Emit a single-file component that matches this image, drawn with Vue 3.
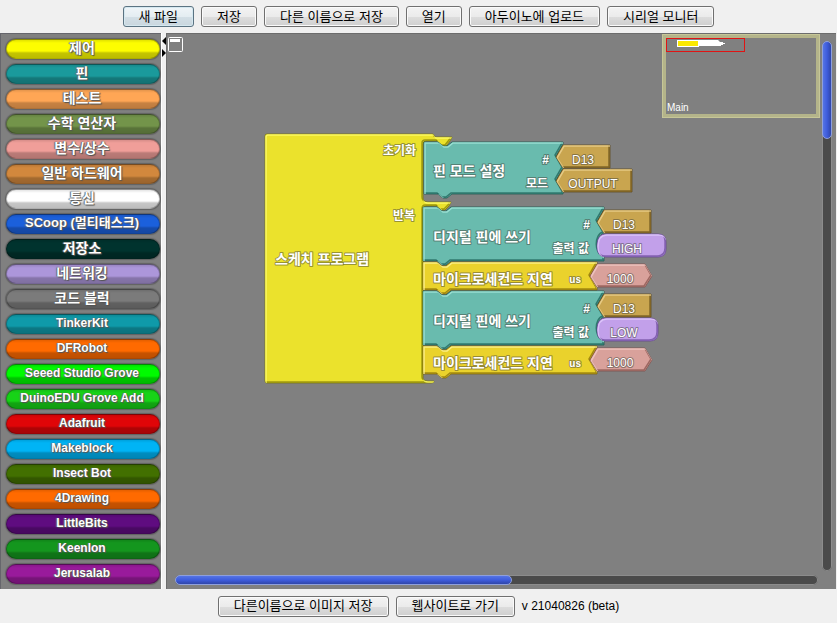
<script setup>
const fileActions = ['새 파일', '저장', '다른 이름으로 저장', '열기', '아두이노에 업로드', '시리얼 모니터']

const drawers = [
  { name: '제어', color: '#fdfd00', script: 'ko' },
  { name: '핀', color: '#1a9a9c', script: 'ko' },
  { name: '테스트', color: '#ffa655', script: 'ko' },
  { name: '수학 연산자', color: '#73944a', script: 'ko' },
  { name: '변수/상수', color: '#f09e99', script: 'ko' },
  { name: '일반 하드웨어', color: '#d2883d', script: 'ko' },
  { name: '통신', color: '#ffffff', script: 'ko' },
  { name: 'SCoop (멀티태스크)', color: '#1b60dc', script: 'mixed' },
  { name: '저장소', color: '#00332e', script: 'ko' },
  { name: '네트워킹', color: '#ac96da', script: 'ko' },
  { name: '코드 블럭', color: '#7b7b7b', script: 'ko' },
  { name: 'TinkerKit', color: '#0f9aa9', script: 'latin' },
  { name: 'DFRobot', color: '#ff6a00', script: 'latin' },
  { name: 'Seeed Studio Grove', color: '#00fb00', script: 'latin' },
  { name: 'DuinoEDU Grove Add', color: '#17d317', script: 'latin' },
  { name: 'Adafruit', color: '#e00508', script: 'latin' },
  { name: 'Makeblock', color: '#00b4f5', script: 'latin' },
  { name: 'Insect Bot', color: '#427000', script: 'latin' },
  { name: '4Drawing', color: '#ff6a00', script: 'latin' },
  { name: 'LittleBits', color: '#5f0c80', script: 'latin' },
  { name: 'Keenlon', color: '#14961e', script: 'latin' },
  { name: 'Jerusalab', color: '#991a9b', script: 'latin' },
]

// Statement block: notch in the top edge, tab under the bottom edge, sockets down the right edge.
function statement(x, y, w, h, sockets) {
  const r = x + w
  let d = `M${x} ${y}H${x + 14}L${x + 19} ${y + 4}H${x + 23}L${x + 28} ${y}H${r}`
  sockets.forEach((kind, i) => {
    const top = y + 2 + i * 24
    d += kind === 'round'
      ? `V${top}C${r - 9} ${top + 2} ${r - 9} ${top + 22} ${r} ${top + 24}`
      : `V${top}L${r - 7} ${top + 12}L${r} ${top + 24}`
  })
  return `${d}V${y + h}H${x + 28}L${x + 23} ${y + h + 4}H${x + 19}L${x + 14} ${y + h}H${x}Z`
}
const tag = (x, y, w) => `M${x} ${y + 12}L${x + 7} ${y}H${x + w}V${y + 23}H${x + 7}Z`
const pill = (x, y, w) =>
  `M${x + 9} ${y}H${x + w - 8}Q${x + w} ${y} ${x + w} ${y + 8}V${y + 15}Q${x + w} ${y + 23} ${x + w - 8} ${y + 23}H${x + 9}Q${x} ${y + 23} ${x} ${y + 12}Q${x} ${y} ${x + 9} ${y}Z`
const hex = (x, y, w) =>
  `M${x} ${y + 12}L${x + 7} ${y}H${x + w - 7}L${x + w} ${y + 12}L${x + w - 7} ${y + 23}H${x + 7}Z`

const program =
  'M265 136Q265 134 267 134H433L435 137H452L450 141L446 146H442L437 141H426Q423 141 423 144V198Q423 202 427 202H451L449 206L445 210H441L437 206H426Q423 206 423 210V378Q423 381 427 381H434Q434 383 431 383H267Q265 383 265 381Z'

const teal = { fill: '#69bbae', light: '#a4e6da', dark: '#12564d' }
const amber = { fill: '#ead22c', light: '#fff59a', dark: '#7c6300' }
const gold = { fill: '#c9a54f', light: '#ecd291', dark: '#5b4413' }
const violet = { fill: '#c2a0ea', light: '#e0cbfb', dark: '#634093' }
const rose = { fill: '#d9a19b', light: '#f1cac5', dark: '#7e4944' }

const shapes = [
  { d: program, fill: '#ebe22c', light: '#ffff70', dark: '#777300' },
  { d: statement(424, 142, 139, 52, ['tag', 'tag']), ...teal },
  { d: statement(423, 207, 181, 54, ['tag', 'round']), ...teal },
  { d: statement(423, 262, 174, 28, ['tag']), ...amber },
  { d: statement(423, 291, 181, 54, ['tag', 'round']), ...teal },
  { d: statement(423, 346, 174, 28, ['tag']), ...amber },
  { d: tag(556, 145, 54), ...gold },
  { d: tag(556, 169, 76), ...gold },
  { d: tag(597, 210, 54), ...gold },
  { d: pill(597, 234, 69), ...violet },
  { d: hex(590, 264, 62), ...rose },
  { d: tag(597, 294, 54), ...gold },
  { d: pill(597, 318, 61), ...violet },
  { d: hex(590, 348, 62), ...rose },
]

const labels = [
  { x: 275, y: 264, text: '스케치 프로그램', kind: 'name' },
  { x: 433, y: 176, text: '핀 모드 설정', kind: 'name' },
  { x: 433, y: 242, text: '디지털 핀에 쓰기', kind: 'name' },
  { x: 433, y: 284, text: '마이크로세컨드 지연', kind: 'name' },
  { x: 433, y: 326, text: '디지털 핀에 쓰기', kind: 'name' },
  { x: 433, y: 368, text: '마이크로세컨드 지연', kind: 'name' },
  { x: 416, y: 155, text: '초기화', kind: 'param' },
  { x: 415, y: 220, text: '반복', kind: 'param' },
  { x: 549, y: 164, text: '#', kind: 'param' },
  { x: 548, y: 188, text: '모드', kind: 'param' },
  { x: 590, y: 229, text: '#', kind: 'param' },
  { x: 589, y: 253, text: '출력 값', kind: 'param' },
  { x: 581, y: 283, text: 'us', kind: 'unit' },
  { x: 590, y: 313, text: '#', kind: 'param' },
  { x: 589, y: 337, text: '출력 값', kind: 'param' },
  { x: 581, y: 367, text: 'us', kind: 'unit' },
  { x: 583, y: 164, text: 'D13', kind: 'value' },
  { x: 593, y: 188, text: 'OUTPUT', kind: 'value' },
  { x: 624, y: 229, text: 'D13', kind: 'value' },
  { x: 627, y: 253, text: 'HIGH', kind: 'value' },
  { x: 620, y: 283, text: '1000', kind: 'value' },
  { x: 624, y: 313, text: 'D13', kind: 'value' },
  { x: 624, y: 337, text: 'LOW', kind: 'value' },
  { x: 620, y: 367, text: '1000', kind: 'value' },
]
</script>

<template>
  <div class="app">
    <header class="bar">
      <button v-for="(action, i) in fileActions" :key="action" type="button" class="btn" :class="{ focused: i === 0 }">
        {{ action }}
      </button>
    </header>

    <main class="editor">
      <nav class="drawers">
        <button
          v-for="drawer in drawers"
          :key="drawer.name"
          type="button"
          class="drawer"
          :class="drawer.script"
          :style="{ backgroundColor: drawer.color }"
        >
          {{ drawer.name }}
        </button>
      </nav>

      <div class="divider">
        <button type="button" class="collapse" aria-label="접기">
          <svg width="4" height="8" viewBox="0 0 4 8"><path d="M4 0V8L0 4Z" /></svg>
        </button>
        <button type="button" class="collapse" aria-label="펼치기">
          <svg width="4" height="8" viewBox="0 0 4 8"><path d="M0 0V8L4 4Z" /></svg>
        </button>
      </div>

      <section class="workspace">
        <button type="button" class="page-toggle" aria-label="페이지">
          <svg width="15" height="15" viewBox="0 0 15 15">
            <rect x="0.5" y="0.5" width="14" height="14" rx="1" fill="none" stroke="#fff" />
            <rect x="2" y="2" width="10" height="3" fill="#fff" />
          </svg>
        </button>

        <svg class="blocks" width="420" height="260" viewBox="260 130 420 260">
          <defs>
            <clipPath v-for="(s, i) in shapes" :id="'shape' + i" :key="i"><path :d="s.d" /></clipPath>
          </defs>
          <g v-for="(s, i) in shapes" :key="i">
            <path :d="s.d" :fill="s.fill" :stroke="s.dark" stroke-width="1" stroke-opacity="0.7" />
            <g :clip-path="`url(#shape${i})`" fill="none" stroke-width="1.5">
              <path :d="s.d" :stroke="s.dark" transform="translate(-1 -1)" opacity="0.65" />
              <path :d="s.d" :stroke="s.light" transform="translate(1 1)" opacity="0.8" />
            </g>
          </g>
          <text v-for="(l, i) in labels" :key="'t' + i" :x="l.x" :y="l.y" :class="l.kind">{{ l.text }}</text>
        </svg>

        <div class="minimap">
          <div class="viewport">
            <svg class="overview" width="77" height="12" viewBox="1 1 77 12">
              <path d="M11 2H52L54 4H57V5H59V6H57V7H55V8H33V9H11Z" fill="#fff" />
              <rect x="12" y="3" width="20" height="5" fill="#fbe800" />
            </svg>
          </div>
          <span class="page-name">Main</span>
        </div>

        <div class="track vertical"><div class="thumb"></div></div>
        <div class="track horizontal"><div class="thumb"></div></div>
      </section>
    </main>

    <footer class="bar">
      <button type="button" class="btn">다른이름으로 이미지 저장</button>
      <button type="button" class="btn">웹사이트로 가기</button>
      <span class="version">v 21040826 (beta)</span>
    </footer>
  </div>
</template>

<style>
body {
  margin: 0;
  background: #f0f0f0;
}
</style>

<style scoped>
.app {
  display: grid;
  grid-template-rows: 33px 1fr 34px;
  min-height: 100vh;
  background: #f0f0f0;
  font-family: "Liberation Sans", "Noto Sans CJK KR", sans-serif;
  font-size: 13px;
  color: #000;
}
button {
  font: inherit;
  cursor: pointer;
}
.bar {
  display: flex;
  justify-content: center;
  align-items: center;
  gap: 7px;
}
.btn {
  box-sizing: border-box;
  height: 21px;
  padding: 0 15px;
  border: 1px solid #707070;
  border-radius: 3px;
  background: linear-gradient(#f3f3f3 0%, #ebebeb 50%, #dddddd 51%, #cfcfcf 100%);
  box-shadow: inset 0 0 0 1px #fafafa;
  color: #000;
  line-height: 18px;
  white-space: nowrap;
}
.btn.focused {
  border-color: #5b7382;
  background: linear-gradient(#f0f5f8 0%, #e4edf2 50%, #d3dfe6 51%, #c9d6de 100%);
  box-shadow: inset 0 0 0 1px #d5e8f0;
}
.version {
  font-family: "Liberation Sans", sans-serif;
  font-size: 12px;
  line-height: 18px;
}
.editor {
  display: flex;
  padding-right: 1px;
}
.drawers {
  box-sizing: border-box;
  flex: 0 0 161px;
  display: flex;
  flex-direction: column;
  gap: 5px;
  padding: 5px 1px 5px 5px;
  border-top: 1px solid #66666c;
  border-left: 1px solid #66666c;
  background: #808080;
}
.drawer {
  box-sizing: border-box;
  height: 20px;
  padding: 0 2px 2px 0;
  border: 1px solid rgba(0, 0, 0, 0.25);
  border-radius: 10px;
  background-image: linear-gradient(rgba(0, 0, 0, 0.1) 0, transparent 3px, transparent 11px, rgba(0, 0, 0, 0.22) 13px, rgba(0, 0, 0, 0.26) 100%);
  box-shadow: 0 0 1px 1px rgba(40, 40, 40, 0.35);
  color: #fff;
  font-weight: 700;
  line-height: 16px;
  text-shadow: 0 0 1px #444, 1px 1px 1px #555, -1px 0 1px #777;
  white-space: nowrap;
}
.latin {
  font-size: 12px;
}
.ko {
  font-size: 14px;
}
.mixed {
  font-size: 13px;
}
.divider {
  box-sizing: border-box;
  flex: 0 0 5px;
  display: flex;
  flex-direction: column;
  gap: 4px;
  padding-top: 4px;
  border-left: 1px solid #fff;
  background: #f0f0f0;
}
.collapse {
  display: block;
  height: 8px;
  padding: 0;
  border: 0;
  background: none;
}
.collapse svg {
  display: block;
}
.workspace {
  position: relative;
  flex: 1;
  min-width: 0;
  box-sizing: border-box;
  border-top: 1px solid #6c6c6c;
  border-left: 1px solid #6c6c6c;
  background: #808080;
  overflow: hidden;
}
.page-toggle {
  position: absolute;
  left: 1px;
  top: 3px;
  padding: 0;
  border: 0;
  background: none;
}
.page-toggle svg {
  display: block;
}
.blocks {
  position: absolute;
  left: 93px;
  top: 96px;
}
.blocks text {
  fill: #fff;
  stroke: rgba(70, 70, 60, 0.5);
  stroke-width: 2px;
  stroke-linejoin: round;
  paint-order: stroke;
  font-weight: 700;
}
.blocks .name {
  font-size: 14px;
}
.blocks .param {
  font-size: 12px;
  text-anchor: end;
}
.blocks .unit {
  font-size: 10px;
  text-anchor: end;
}
.blocks .value {
  font-size: 12px;
  font-weight: 400;
  text-anchor: middle;
}
.minimap {
  position: absolute;
  top: 0;
  right: 16px;
  box-sizing: border-box;
  width: 158px;
  height: 84px;
  display: flex;
  flex-direction: column;
  justify-content: space-between;
  align-items: flex-start;
  padding: 4px;
  background: #808080;
  box-shadow:
    inset 0 0 0 1px #c6c698,
    inset 0 0 0 1px #8c8c80,
    inset 0 0 0 4px #b4b48a;
}
.viewport {
  border: 1px solid #e01414;
}
.overview {
  display: block;
}
.page-name {
  padding-left: 1px;
  color: #fff;
  font-size: 10px;
  line-height: 12px;
}
.track {
  position: absolute;
  border-radius: 5px;
  background: #4a4a4a;
  box-shadow: inset 0 0 0 1px #8c8c8c;
}
.thumb {
  box-sizing: border-box;
  border: 1px solid #8e9fdc;
  border-radius: 5px;
}
.vertical {
  top: 7px;
  right: 4px;
  bottom: 18px;
  width: 10px;
}
.vertical .thumb {
  width: 10px;
  height: 18.5%;
  background: linear-gradient(90deg, #5574e4, #3e5cdc 50%, #2f45a8);
}
.horizontal {
  left: 8px;
  right: 18px;
  bottom: 4px;
  height: 10px;
}
.horizontal .thumb {
  width: 52.4%;
  height: 10px;
  background: linear-gradient(#5574e4, #3e5cdc 50%, #2f45a8);
}
</style>
